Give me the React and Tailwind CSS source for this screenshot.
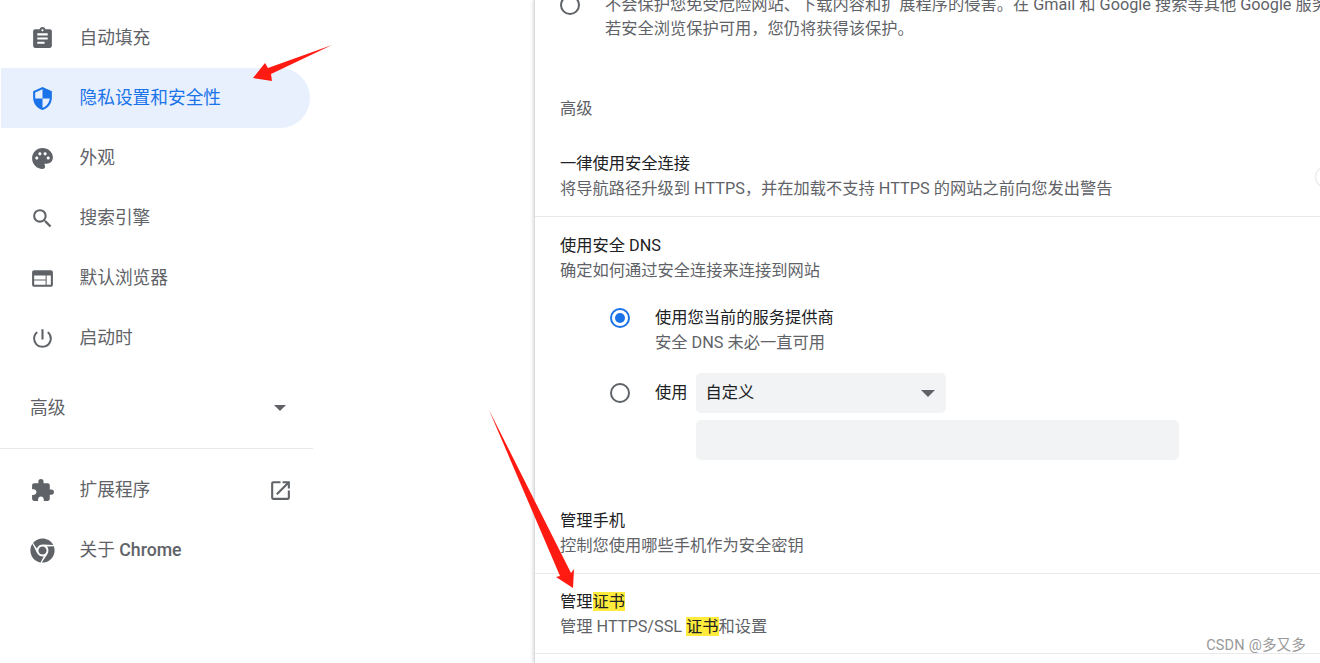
import React from "react";
import { MdAssignment, MdSecurity, MdPalette, MdSearch, MdWeb, MdPowerSettingsNew, MdExtension, MdOpenInNew } from "react-icons/md";
import { FaChrome } from "react-icons/fa";

const FONT = "font-['Roboto','Noto_Sans_CJK_SC',sans-serif]";

function NavItem({ icon: Icon, label, active, children }) {
  return (
    <div className={`flex h-[60px] items-center ${active ? "ml-px w-[309px] rounded-r-[30px] bg-[#e8f0fe] pl-[29px] text-[#1a73e8]" : "w-[313px] pl-[30px] text-[#5f6368]"}`}>
      <Icon className="h-[25px] w-[25px] shrink-0" />
      <span className="ml-[24.5px] text-[17.7px]">{label}</span>
      {children}
    </div>
  );
}

function Sidebar() {
  return (
    <aside className="w-[534px] shrink-0 pt-2">
      <NavItem icon={MdAssignment} label="自动填充" />
      <NavItem icon={MdSecurity} label="隐私设置和安全性" active />
      <NavItem icon={MdPalette} label="外观" />
      <NavItem icon={MdSearch} label="搜索引擎" />
      <NavItem icon={MdWeb} label="默认浏览器" />
      <NavItem icon={MdPowerSettingsNew} label="启动时" />
      <div className="mt-[10px] flex h-[60px] w-[313px] items-center justify-between pl-[30px] pr-[27px] text-[#5f6368]">
        <span className="text-[17.7px]">高级</span>
        <span className="h-0 w-0 border-x-[6px] border-t-[6px] border-x-transparent border-t-[#5f6368]" />
      </div>
      <div className="mt-[10px] w-[313px] border-t border-[#e8eaed]" />
      <div className="mt-[11px]">
        <NavItem icon={MdExtension} label="扩展程序">
          <MdOpenInNew className="ml-auto mr-[20px] h-[25px] w-[25px] shrink-0" />
        </NavItem>
        <NavItem icon={FaChrome} label={<span>关于 <span className="font-medium">Chrome</span></span>} />
      </div>
    </aside>
  );
}

function Radio({ checked }) {
  return (
    <span className={`flex h-5 w-5 shrink-0 items-center justify-center rounded-full border-2 ${checked ? "border-[#1a73e8]" : "border-[#5f6368]"}`}>
      {checked && <span className="h-[10px] w-[10px] rounded-full bg-[#1a73e8]" />}
    </span>
  );
}

function Row({ title, sub, children, className = "" }) {
  return (
    <div className={`pl-[25px] ${className}`}>
      <div className="flex h-[25px] items-center text-[16.25px] text-[#202124]">{title}</div>
      <div className="flex h-[25px] items-center text-[16.25px] text-[#5f6368]">{sub}</div>
      {children}
    </div>
  );
}

function Main() {
  return (
    <main className="relative h-[663px] w-[786px] shrink-0 overflow-hidden border-l border-[#dadce0] shadow-[-1px_0_3px_rgba(60,64,67,0.2)]">
      <div className="-mt-[7px] flex pl-[25px]">
        <span className="mt-[2px]"><Radio /></span>
        <div className="ml-[25px] whitespace-nowrap text-[16.25px] leading-[24px] text-[#5f6368]">
          <div>不会保护您免受危险网站、下载内容和扩{"\u200A"}展程序的侵害。在 Gmail 和 Google 搜索等其他 Google 服务中登录时</div>
          <div>若安全浏览保护可用，您仍将获得该保护。</div>
        </div>
      </div>
      <div className="mt-[56px] flex h-[25px] items-center pl-[25px] text-[16.25px] text-[#5f6368]">高级</div>
      <div className="mt-[30px] flex items-center justify-between">
        <Row title="一律使用安全连接" sub="将导航路径升级到 HTTPS，并在加载不支持 HTTPS 的网站之前向您发出警告" />
        <span className="-mr-4 h-5 w-5 shrink-0 rounded-full bg-white shadow-[0_0_2px_rgba(60,64,67,0.4)]" />
      </div>
      <div className="mt-[14px] border-t border-[#e8eaed]" />
      <Row title="使用安全 DNS" sub="确定如何通过安全连接来连接到网站" className="mt-[17px]" />
      <div className="mt-[22px] flex pl-[75px]">
        <span className="mt-[2px]"><Radio checked /></span>
        <div className="ml-[25px] text-[16.25px]">
          <div className="flex h-[25px] items-center text-[#202124]">使用您当前的服务提供商</div>
          <div className="flex h-[25px] items-center text-[#5f6368]">安全 DNS 未必一直可用</div>
        </div>
      </div>
      <div className="mt-[17px] flex items-center pl-[75px]">
        <Radio />
        <span className="ml-[25px] text-[16.25px] text-[#202124]">使用</span>
        <div className="ml-2 flex h-10 w-[250px] items-center justify-between rounded-[5px] bg-[#f1f3f4] px-[10px] text-[16.25px] text-[#202124]">
          自定义
          <span className="mr-px h-0 w-0 border-x-[7px] border-t-[7px] border-x-transparent border-t-[#5f6368]" />
        </div>
      </div>
      <div className="ml-[161px] mt-[7px] h-10 w-[483px] rounded-[5px] bg-[#f1f3f4]" />
      <Row title="管理手机" sub="控制您使用哪些手机作为安全密钥" className="mt-[49px]" />
      <div className="mt-[14px] border-t border-[#e8eaed]" />
      <Row
        className="mt-[16px]"
        title={<span>管理<mark className="bg-[#ffeb3b] text-[#202124]">证书</mark></span>}
        sub={<span>管理 HTTPS/SSL <mark className="bg-[#ffeb3b] text-[#202124]">证书</mark>和设置</span>}
      />
      <div className="mt-[13px] border-t border-[#e8eaed]" />
      <span className="absolute bottom-[6px] right-[14px] text-[14.5px] tracking-[0.2px] text-[#999999]">CSDN @多又多</span>
    </main>
  );
}

function Arrows() {
  return (
    <svg className="pointer-events-none absolute left-0 top-0 h-[663px] w-[1320px]" viewBox="0 0 1320 663">
      <polygon fill="#ff1a12" points="332,45 268,68 265,63 253,78 272,81 271,74" />
      <polygon fill="#ff1a12" points="489,410 560,576 556,577 573,588 574,569 571,573" />
    </svg>
  );
}

export default function App() {
  return (
    <div className={`relative flex h-[663px] w-[1320px] overflow-hidden bg-white ${FONT}`}>
      <Sidebar />
      <Main />
      <Arrows />
    </div>
  );
}
